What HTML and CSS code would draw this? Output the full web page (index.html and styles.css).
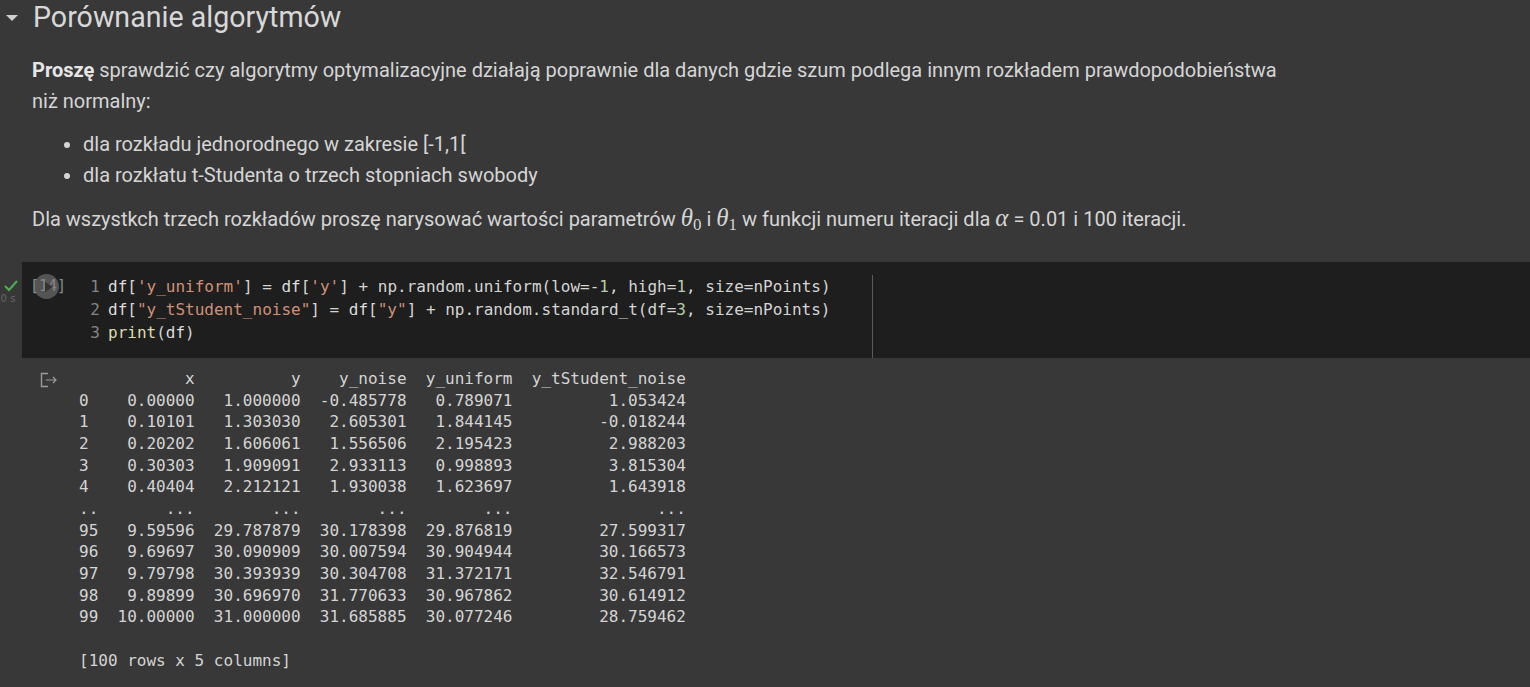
FILE: index.html
```html
<!DOCTYPE html>
<html lang="pl">
<head>
<meta charset="utf-8">
<title>Porównanie algorytmów</title>
<link rel="stylesheet" href="styles.css">
</head>
<body>
<div class="md-cell">
  <div class="heading">
    <span class="caret"></span>
    <h2>Porównanie algorytmów</h2>
  </div>
  <div class="md-body">
    <p><b>Proszę</b> sprawdzić czy algorytmy optymalizacyjne działają poprawnie dla danych gdzie szum podlega innym rozkładem prawdopodobieństwa<br>niż normalny:</p>
    <ul>
      <li>dla rozkładu jednorodnego w zakresie [-1,1[</li>
      <li>dla rozkłatu t-Studenta o trzech stopniach swobody</li>
    </ul>
    <p>Dla wszystkch trzech rozkładów proszę narysować wartości parametrów <span class="math">θ<sub>0</sub></span> i <span class="math">θ<sub>1</sub></span> w funkcji numeru iteracji dla <span class="math">α</span> = 0.01 i 100 iteracji.</p>
  </div>
</div>

<div class="code-cell">
  <div class="status">
    <svg class="check" width="14" height="12" viewBox="0 0 14 12"><polyline points="1,6 5,10 13,1" fill="none" stroke="#4caf50" stroke-width="2"/></svg>
    <span class="time">0 s</span>
  </div>
  <div class="cell-body">
    <div class="exec">
      <span class="count">[14]</span>
      <span class="run"><svg width="10" height="10" viewBox="0 0 10 10"><polygon points="2,0 10,5 2,10" fill="#333333"/></svg></span>
    </div>
    <div class="editor">
      <div class="line"><span class="ln">1</span><span class="v">df</span>[<span class="s">'y_uniform'</span>] = <span class="v">df</span>[<span class="s">'y'</span>] + np.random.uniform(low=-<span class="n">1</span>, high=<span class="n">1</span>, size=nPoints)</div>
      <div class="line"><span class="ln">2</span><span class="v">df</span>[<span class="s">"y_tStudent_noise"</span>] = <span class="v">df</span>[<span class="s">"y"</span>] + np.random.standard_t(df=<span class="n">3</span>, size=nPoints)</div>
      <div class="line"><span class="ln">3</span><span class="f">print</span>(<span class="v">df</span>)</div>
    </div>
  </div>
</div>

<div class="output">
  <div class="out-icon">
    <svg width="18" height="16" viewBox="0 0 18 16"><path d="M8 1.5H1.5v13H8" fill="none" stroke="#9a9a9a" stroke-width="1.4"/><path d="M6 8h10M13 5l3 3-3 3" fill="none" stroke="#9a9a9a" stroke-width="1.2"/></svg>
  </div>
<pre class="out-text">           x          y    y_noise  y_uniform  y_tStudent_noise
0    0.00000   1.000000  -0.485778   0.789071          1.053424
1    0.10101   1.303030   2.605301   1.844145         -0.018244
2    0.20202   1.606061   1.556506   2.195423          2.988203
3    0.30303   1.909091   2.933113   0.998893          3.815304
4    0.40404   2.212121   1.930038   1.623697          1.643918
..       ...        ...        ...        ...               ...
95   9.59596  29.787879  30.178398  29.876819         27.599317
96   9.69697  30.090909  30.007594  30.904944         30.166573
97   9.79798  30.393939  30.304708  31.372171         32.546791
98   9.89899  30.696970  31.770633  30.967862         30.614912
99  10.00000  31.000000  31.685885  30.077246         28.759462

[100 rows x 5 columns]</pre>
</div>
</body>
</html>
```
FILE: styles.css
```css
html, body {
  margin: 0;
  padding: 0;
  background: #383838;
  height: 100%;
  overflow: hidden;
}
body {
  font-family: Roboto, "Noto Sans", sans-serif;
  color: #d5d5d5;
}
.heading {
  display: flex;
  align-items: center;
  height: 34px;
}
.caret {
  width: 0;
  height: 0;
  border-left: 6px solid transparent;
  border-right: 6px solid transparent;
  border-top: 6px solid #cfcfcf;
  margin: 1px 15px 0 6px;
}
.heading h2 {
  margin: 0;
  font-size: 28.6px;
  font-weight: 400;
  line-height: 34px;
  color: #d8d8d8;
}
.md-body {
  padding-left: 32px;
  font-size: 20px;
  line-height: 31px;
}
.md-body p {
  margin: 21px 0 0;
}
.md-body b {
  font-weight: 700;
  color: #e6e6e6;
}
.md-body ul {
  margin: 12px 0 0;
  padding-left: 51px;
}
.md-body ul + p {
  margin-top: 11px;
}
.math {
  font-family: "Liberation Serif", "DejaVu Serif", serif;
  font-style: italic;
  font-size: 25px;
}
.math sub {
  font-style: normal;
  font-size: 17px;
  vertical-align: -4px;
  line-height: 0;
}
.code-cell {
  display: flex;
  margin-top: 27px;
  height: 96px;
}
.status {
  width: 22px;
  display: flex;
  flex-direction: column;
  align-items: center;
  padding-top: 18px;
}
.check {
  display: block;
}
.time {
  font-family: "DejaVu Sans", sans-serif;
  font-size: 10px;
  color: #666666;
  margin-top: 1px;
  margin-left: -6px;
}
.cell-body {
  flex: 1;
  background: #1e1e1e;
  display: flex;
  padding-left: 8px;
}
.exec {
  position: relative;
  width: 50px;
  padding-top: 13px;
  font-family: "DejaVu Sans Mono", monospace;
  font-size: 15px;
  line-height: 23px;
  color: #8a8a8a;
}
.run {
  position: absolute;
  left: 4px;
  top: 12px;
  width: 25px;
  height: 25px;
  border-radius: 50%;
  background: rgba(130, 130, 130, 0.55);
  display: flex;
  align-items: center;
  justify-content: center;
}
.run svg {
  margin-left: 3px;
}
.editor {
  width: 793px;
  box-sizing: border-box;
  margin-top: 13px;
  border-right: 1px solid #5a5a5a;
  font-family: "DejaVu Sans Mono", monospace;
  font-size: 16px;
  line-height: 23px;
  color: #d4d4d4;
}
.line {
  white-space: pre;
}
.ln {
  display: inline-block;
  width: 20px;
  padding-right: 8px;
  text-align: right;
  color: #858585;
}
.s { color: #ce9178; }
.n { color: #b5cea8; }
.f { color: #dcdcaa; }
.v { color: #dcdcdc; }
.output {
  display: flex;
  padding-top: 10px;
}
.out-icon {
  width: 79px;
  padding: 4px 0 0 40px;
  box-sizing: border-box;
}
.out-text {
  margin: 0;
  font-family: "DejaVu Sans Mono", monospace;
  font-size: 16px;
  line-height: 21.65px;
  color: #d4d4d4;
}
```
